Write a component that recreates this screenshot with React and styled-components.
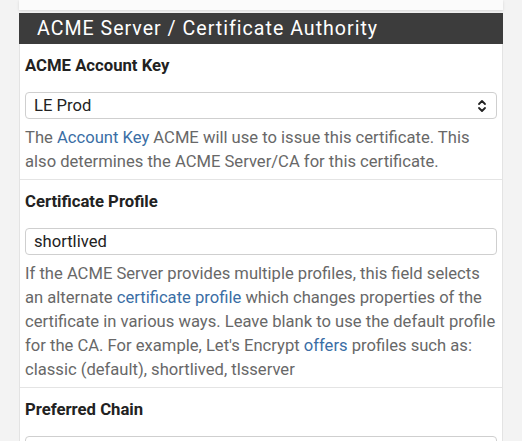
import React from "react";
import styled, { createGlobalStyle } from "styled-components";

const Global = createGlobalStyle`
  html, body { margin: 0; padding: 0; background: #f3f3f3; }
  body { font-family: Roboto, "Liberation Sans", sans-serif; overflow: hidden; }
`;

const Page = styled.div`
  width: 522px;
  height: 441px;
  padding: 0 19px;
  box-sizing: border-box;
  overflow: hidden;
`;

const PrevCard = styled.div`
  width: 484px;
  height: 10px;
  background: #fbfbfb;
  box-shadow: 0 1px 3px rgba(0, 0, 0, 0.12);
  margin-bottom: 3px;
`;

const Panel = styled.section`
  width: 484px;
  background: #fff;
  border-left: 1px solid #e3e3e3;
  border-right: 1px solid #e3e3e3;
  box-sizing: border-box;
`;

const Heading = styled.h2`
  margin: 0 -1px;
  height: 31px;
  background: #3c3c3c;
  color: #fff;
  font-size: 19.6px;
  font-weight: 400;
  letter-spacing: 1px;
  line-height: 31px;
  padding-left: 18px;
`;

const Field = styled.div`
  padding: 12px 5px 5px 5px;
  border-bottom: ${(p) => (p.$last ? "none" : "1px solid #e4e4e4")};
`;

const Label = styled.div`
  font-size: 16.7px;
  font-weight: 700;
  color: #222;
  line-height: 20px;
  margin-bottom: 16px;
`;

const Control = styled.div`
  height: 27px;
  border: 1px solid #cfcfcf;
  border-radius: 4px;
  box-sizing: border-box;
  display: flex;
  align-items: center;
  justify-content: space-between;
  padding: 0 9px 0 8px;
  font-size: 16.6px;
  color: #222;
  margin-bottom: 7px;
`;

const Help = styled.p`
  margin: 0;
  font-size: 16.6px;
  line-height: 24px;
  color: #686868;
`;

const Link = styled.a`
  color: #3a6ea5;
  text-decoration: none;
`;

const Chevrons = () => (
  <svg width="10" height="14" viewBox="0 0 10 14" fill="none" stroke="#222" strokeWidth="1.8" strokeLinecap="round" strokeLinejoin="round">
    <path d="M2 5 L5 2 L8 5" />
    <path d="M2 9 L5 12 L8 9" />
  </svg>
);

export default function App() {
  return (
    <>
      <Global />
      <Page>
        <PrevCard />
        <Panel>
          <Heading>ACME Server / Certificate Authority</Heading>
          <Field>
            <Label>ACME Account Key</Label>
            <Control>
              <span>LE Prod</span>
              <Chevrons />
            </Control>
            <Help>
              The <Link>Account Key</Link> ACME will use to issue this certificate. This also determines the ACME Server/CA for this certificate.
            </Help>
          </Field>
          <Field>
            <Label>Certificate Profile</Label>
            <Control>
              <span>shortlived</span>
            </Control>
            <Help>
              If the ACME Server provides multiple profiles, this field selects an alternate <Link>certificate profile</Link> which changes properties of the certificate in various ways. Leave blank to use the default profile for the CA. For example, Let's Encrypt <Link>offers</Link> profiles such as: classic (default), shortlived, tlsserver
            </Help>
          </Field>
          <Field $last>
            <Label>Preferred Chain</Label>
            <Control />
          </Field>
        </Panel>
      </Page>
    </>
  );
}
